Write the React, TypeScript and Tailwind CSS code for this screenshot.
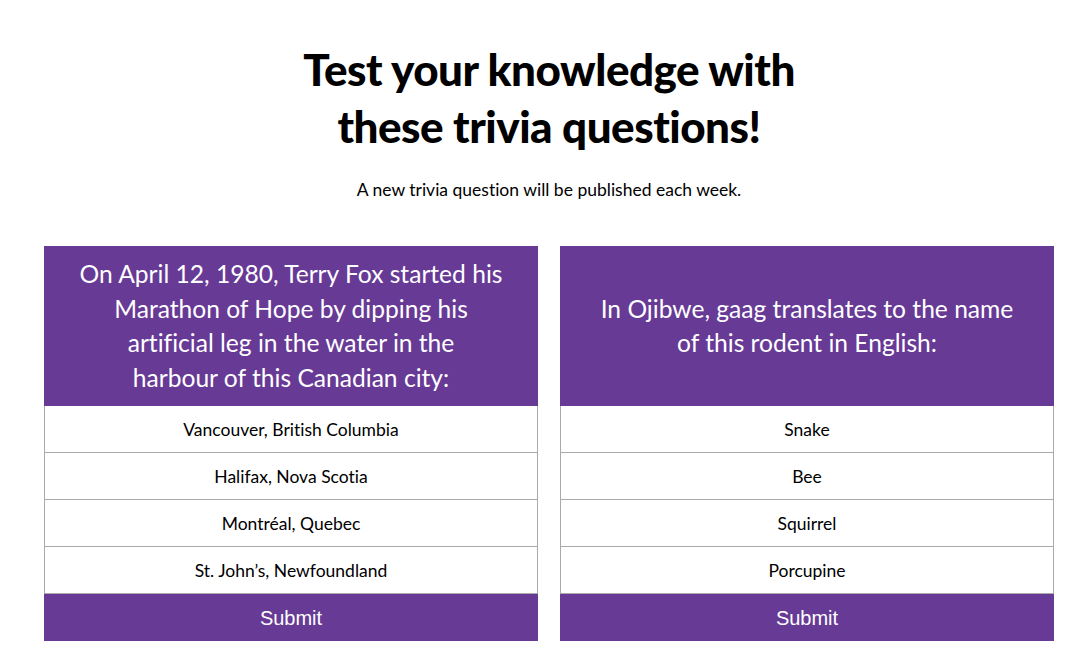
import React from "react";

const cards = [
  {
    q: ["On April 12, 1980, Terry Fox started his", "Marathon of Hope by dipping his", "artificial leg in the water in the", "harbour of this Canadian city:"],
    options: ["Vancouver, British Columbia", "Halifax, Nova Scotia", "Montréal, Quebec", "St. John’s, Newfoundland"],
  },
  {
    q: ["In Ojibwe, gaag translates to the name", "of this rodent in English:"],
    options: ["Snake", "Bee", "Squirrel", "Porcupine"],
  },
];

export default function App() {
  return (
    <div className="min-h-[666px] bg-white pl-[44px] pr-[26px] pt-[41px] text-black [font-variant-ligatures:none]" style={{ fontFamily: "Lato, 'Noto Sans', sans-serif" }}>
      <h1 className="mx-auto text-center text-[44px] font-black leading-[57px] tracking-[-0.5px]">
        Test your knowledge with
        <br />
        these trivia questions!
      </h1>
      <p className="mt-[24px] text-center text-[17.5px] leading-[22px]">A new trivia question will be published each week.</p>
      <div className="mt-[45px] grid grid-cols-2 gap-[22px]">
        {cards.map((c, i) => (
          <div key={i} className="flex flex-col">
            <div className="flex h-[160px] flex-col items-center justify-center bg-[#673a96] px-[20px] text-center text-[24.6px] leading-[34.5px] text-white">
              {c.q.map((l) => (
                <span key={l} className="block whitespace-nowrap">{l}</span>
              ))}
            </div>
            {c.options.map((o) => (
              <div key={o} className="flex h-[47px] items-center justify-center border-x border-b border-[#aaaaaa] bg-white pt-[3px] text-[17.5px]">
                {o}
              </div>
            ))}
            <button className="h-[47px] bg-[#673a96] text-[20px] text-white" style={{ fontFamily: "'Liberation Sans', Arial, sans-serif" }}>
              Submit
            </button>
          </div>
        ))}
      </div>
    </div>
  );
}
